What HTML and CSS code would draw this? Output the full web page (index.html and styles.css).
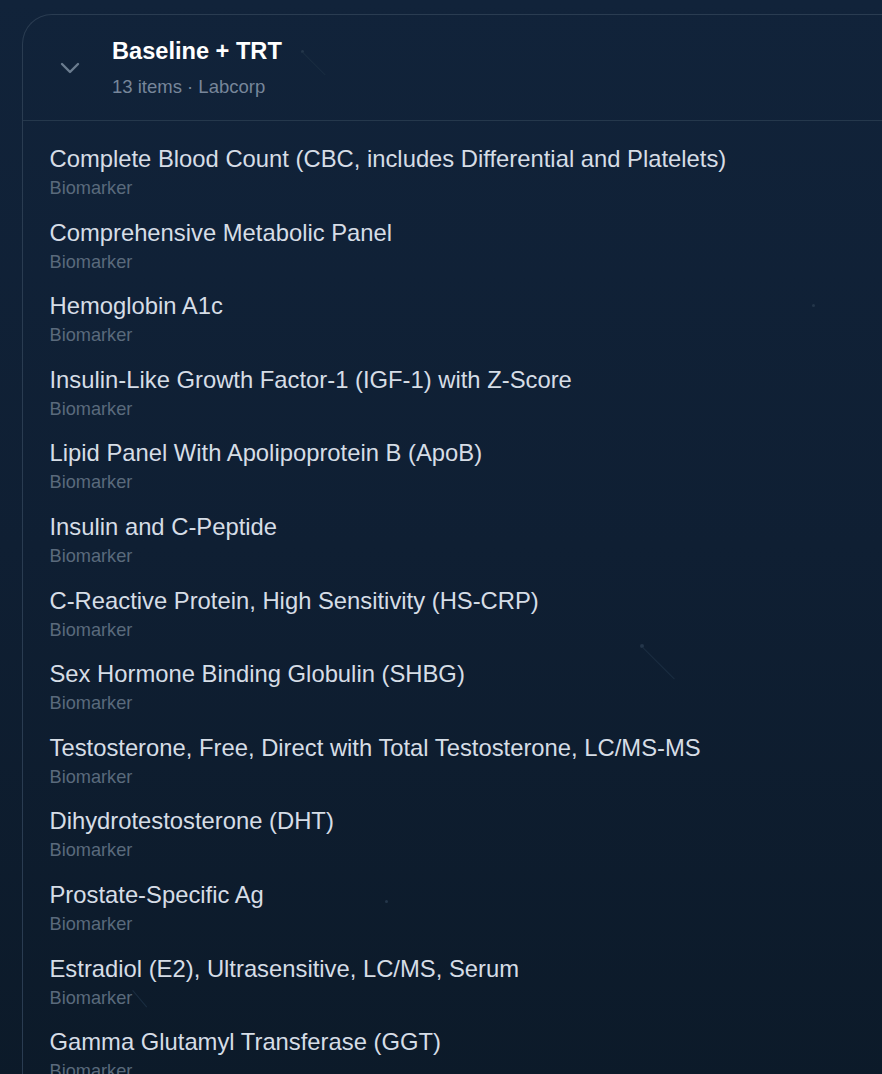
FILE: index.html
```html
<!DOCTYPE html>
<html lang="en">
<head>
<meta charset="utf-8">
<title>Baseline + TRT</title>
<link rel="stylesheet" href="styles.css">
</head>
<body>
<div class="bg-deco" aria-hidden="true">
  <span class="dot d1"></span><span class="line l1"></span>
  <span class="dot d2"></span><span class="line l2"></span>
  <span class="dot d3"></span><span class="line l3"></span>
  <span class="dot d4"></span>
</div>
<section class="panel">
  <header class="panel-head">
    <button class="toggle" aria-label="Collapse">
      <svg width="20" height="12" viewBox="0 0 20 12"><path d="M2 2 L10 10 L18 2" fill="none" stroke="currentColor" stroke-width="2.4" stroke-linecap="round" stroke-linejoin="round"/></svg>
    </button>
    <div class="head-text">
      <h2 class="panel-title">Baseline + TRT</h2>
      <p class="panel-meta">13 items · Labcorp</p>
    </div>
  </header>
  <ul class="items">
    <li class="item"><div class="item-name">Complete Blood Count (CBC, includes Differential and Platelets)</div><div class="item-type">Biomarker</div></li>
    <li class="item"><div class="item-name">Comprehensive Metabolic Panel</div><div class="item-type">Biomarker</div></li>
    <li class="item"><div class="item-name">Hemoglobin A1c</div><div class="item-type">Biomarker</div></li>
    <li class="item"><div class="item-name">Insulin-Like Growth Factor-1 (IGF-1) with Z-Score</div><div class="item-type">Biomarker</div></li>
    <li class="item"><div class="item-name">Lipid Panel With Apolipoprotein B (ApoB)</div><div class="item-type">Biomarker</div></li>
    <li class="item"><div class="item-name">Insulin and C-Peptide</div><div class="item-type">Biomarker</div></li>
    <li class="item"><div class="item-name">C-Reactive Protein, High Sensitivity (HS-CRP)</div><div class="item-type">Biomarker</div></li>
    <li class="item"><div class="item-name">Sex Hormone Binding Globulin (SHBG)</div><div class="item-type">Biomarker</div></li>
    <li class="item"><div class="item-name">Testosterone, Free, Direct with Total Testosterone, LC/MS-MS</div><div class="item-type">Biomarker</div></li>
    <li class="item"><div class="item-name">Dihydrotestosterone (DHT)</div><div class="item-type">Biomarker</div></li>
    <li class="item"><div class="item-name">Prostate-Specific Ag</div><div class="item-type">Biomarker</div></li>
    <li class="item"><div class="item-name">Estradiol (E2), Ultrasensitive, LC/MS, Serum</div><div class="item-type">Biomarker</div></li>
    <li class="item"><div class="item-name">Gamma Glutamyl Transferase (GGT)</div><div class="item-type">Biomarker</div></li>
  </ul>
</section>
</body>
</html>
```
FILE: styles.css
```css
html, body {
  margin: 0;
  padding: 0;
}
body {
  background: linear-gradient(180deg, #11233a 0%, #0f1f33 50%, #0c1a29 100%);
  min-height: 1074px;
  overflow: hidden;
  font-family: "Liberation Sans", Arial, Helvetica, sans-serif;
  position: relative;
}
.bg-deco {
  position: absolute;
  inset: 0;
  pointer-events: none;
}
.dot {
  position: absolute;
  width: 4px;
  height: 4px;
  background: #24364a;
  border-radius: 2px;
}
.line {
  position: absolute;
  height: 1px;
  background: #1a2d41;
  transform-origin: 0 0;
}
.d1 { left: 301px; top: 50px; width: 3px; height: 3px; }
.l1 { left: 303px; top: 52px; width: 32px; transform: rotate(45deg); }
.d2 { left: 640px; top: 644px; }
.l2 { left: 643px; top: 647px; width: 45px; transform: rotate(45deg); }
.d3 { left: 812px; top: 304px; width: 3px; height: 3px; }
.l3 { left: 133px; top: 990px; width: 22px; transform: rotate(50deg); }
.d4 { left: 385px; top: 900px; width: 3px; height: 3px; }

.panel {
  position: relative;
  margin: 14px 0 0 22px;
  border: 1.5px solid #2a3c51;
  border-right: none;
  border-bottom: none;
  border-top-left-radius: 30px;
  background: transparent;
}
.panel-head {
  display: flex;
  align-items: center;
  height: 106px;
  border-bottom: 1.5px solid #25384c;
  box-sizing: border-box;
}
.toggle {
  width: 90px;
  padding: 0 0 0 4px;
  margin: 0;
  border: none;
  background: none;
  color: #6a7c8f;
  display: flex;
  justify-content: center;
  align-items: center;
  align-self: stretch;
  box-sizing: border-box;
}
.toggle svg {
  display: block;
}
.head-text {
  display: flex;
  flex-direction: column;
  gap: 11px;
  margin: 0 0 0 -1px;
}
.panel-title {
  margin: 0;
  color: #ffffff;
  font-size: 23.6px;
  font-weight: 700;
  line-height: 28px;
}
.panel-meta {
  margin: 0;
  color: #77869a;
  font-size: 18.5px;
  line-height: 22px;
}
.items {
  list-style: none;
  margin: 0;
  padding: 14px 0 0 0;
}
.item {
  padding: 10px 0 9.6px 26.5px;
}
.item-name {
  color: #d6dde6;
  font-size: 23.8px;
  line-height: 28px;
}
.item-type {
  margin-top: 4px;
  color: #5a6a7c;
  font-size: 18.2px;
  line-height: 22px;
}
```
